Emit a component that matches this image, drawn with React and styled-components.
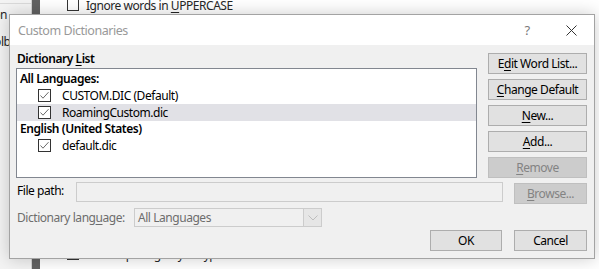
import React from 'react';
import styled, { createGlobalStyle } from 'styled-components';

const GlobalStyle = createGlobalStyle`
  html, body {
    margin: 0;
    padding: 0;
    background: #ffffff;
  }
  * {
    box-sizing: border-box;
  }
`;

const Stage = styled.div`
  position: relative;
  width: 599px;
  height: 269px;
  overflow: hidden;
  background: #ffffff;
  font-family: "Noto Sans", "Open Sans", sans-serif;
  font-size: 12px;
  letter-spacing: -0.45px;
  color: #000;
`;

/* Word Options window sitting behind the dialog */
const BackWindow = styled.div`
  display: flex;
  height: 100%;
`;

const NavPane = styled.div`
  width: 32px;
  flex-shrink: 0;
  display: flex;
  flex-direction: column;
  padding-top: 3px;
  background: #f3f3f3;
  border-right: 1px solid #d2d2d2;
  overflow: hidden;
`;

const NavSeparator = styled.div`
  height: 1px;
  background: #dadada;
`;

const NavItem = styled.div`
  white-space: nowrap;
  line-height: 22px;
  margin-bottom: 5px;
  margin-left: -88px;
  color: #262626;
`;

const Splitter = styled.div`
  width: 8px;
  flex-shrink: 0;
  background: #626262;
`;

const OptionsPane = styled.div`
  flex: 1;
  display: flex;
  flex-direction: column;
  padding-left: 27px;
`;

const OptionRow = styled.div`
  display: flex;
  align-items: center;
  gap: 7px;
  height: 16px;
  color: #262626;
  margin-top: ${(p) => (p.$bottom ? 'auto' : '-3px')};
  margin-bottom: ${(p) => (p.$bottom ? '7px' : '0')};
`;

const BackCheck = styled.span`
  width: 12px;
  height: 12px;
  border: 1px solid #333;
  background: #fff;
`;

/* Dialog */
const Dialog = styled.div`
  position: absolute;
  left: 9px;
  top: 14px;
  width: 586px;
  height: 245px;
  display: flex;
  flex-direction: column;
  background: #f0f0f0;
  border: 1px solid #a3a3a3;
  box-shadow: 0 0 16px rgba(0, 0, 0, 0.2);
`;

const TitleBar = styled.div`
  height: 30px;
  flex-shrink: 0;
  display: flex;
  align-items: center;
  padding-left: 8px;
  background: #ffffff;
`;

const Title = styled.div`
  flex: 1;
  color: #999999;
  font-size: 12.5px;
`;

const TitleButton = styled.div`
  width: 46px;
  height: 30px;
  display: flex;
  align-items: center;
  justify-content: center;
  color: #7a7a7a;
  font-size: 13px;
  padding-left: ${(p) => (p.$help ? '4px' : '0')};
`;

const Body = styled.div`
  flex: 1;
  display: flex;
  flex-direction: column;
  padding: 7px 7px 7px 6px;
`;

const TopRow = styled.div`
  display: flex;
  gap: 11px;
`;

const ListColumn = styled.div`
  flex: 1;
  display: flex;
  flex-direction: column;
`;

const GroupLabel = styled.div`
  height: 16px;
  line-height: 14px;
  padding-left: 1px;
  font-weight: 600;
`;

const ListBox = styled.div`
  height: 110px;
  padding: 1px 0;
  background: #ffffff;
  border: 1px solid #828790;
`;

const ListHeader = styled.div`
  height: 16px;
  line-height: 16px;
  padding-left: 3px;
  font-weight: 600;
  margin-top: ${(p) => (p.$first ? '1px' : '0')};
`;

const ListItem = styled.div`
  height: 17px;
  display: flex;
  align-items: center;
  gap: 11px;
  padding-left: 21px;
  background: ${(p) => (p.$selected ? '#e1e1e6' : 'transparent')};
`;

const CheckBox = styled.span`
  width: 13px;
  height: 13px;
  display: flex;
  align-items: center;
  justify-content: center;
  border: 1px solid #333333;
  background: #ffffff;
`;

const ButtonColumn = styled.div`
  width: 99px;
  flex-shrink: 0;
  display: flex;
  flex-direction: column;
  gap: 5px;
  padding-top: 1px;
`;

const Button = styled.div`
  width: ${(p) => p.$width || '100%'};
  height: 21px;
  flex-shrink: 0;
  display: flex;
  align-items: center;
  justify-content: center;
  margin-top: ${(p) => p.$offset || '0'};
  background: ${(p) => (p.$disabled ? '#cccccc' : '#e1e1e1')};
  border: 1px solid ${(p) => (p.$disabled ? '#bfbfbf' : '#adadad')};
  color: ${(p) => (p.$disabled ? '#838383' : '#000000')};
  white-space: nowrap;
`;

const FieldRow = styled.div`
  display: flex;
  align-items: flex-start;
  gap: ${(p) => p.$gap || '0'};
  margin-top: ${(p) => p.$top};
`;

const FieldLabel = styled.div`
  width: ${(p) => p.$width};
  flex-shrink: 0;
  padding-left: 1px;
  line-height: ${(p) => p.$line};
  color: ${(p) => (p.$muted ? '#6d6d6d' : '#000000')};
`;

const PathInput = styled.div`
  flex: 1;
  height: 20px;
  background: #f0f0f0;
  border: 1px solid #cccccc;
`;

const Select = styled.div`
  width: 188px;
  height: 19px;
  display: flex;
  background: #f0f0f0;
  border: 1px solid #cccccc;
  color: #6d6d6d;
`;

const SelectValue = styled.div`
  flex: 1;
  padding-left: 3px;
  line-height: 17px;
`;

const SelectArrow = styled.div`
  width: 18px;
  display: flex;
  align-items: center;
  justify-content: center;
  background: #e6e6e6;
  border-left: 1px solid #cccccc;
`;

const Footer = styled.div`
  display: flex;
  justify-content: flex-end;
  gap: 12px;
  margin-top: 3px;
`;

const Key = styled.span`
  text-decoration: underline;
  text-underline-offset: 2px;
`;

const Check = () => (
  <CheckBox>
    <svg width="11" height="11" viewBox="0 0 11 11">
      <polyline points="1.5,5.5 4,8.2 9.5,2.2" fill="none" stroke="#6a6a6a" strokeWidth="1" />
    </svg>
  </CheckBox>
);

const groups = [
  { name: 'All Languages:', items: ['CUSTOM.DIC (Default)', 'RoamingCustom.dic'] },
  { name: 'English (United States)', items: ['default.dic'] },
];

export default function App() {
  return (
    <>
      <GlobalStyle />
      <Stage>
        <BackWindow>
          <NavPane>
            <NavSeparator />
            <NavItem>Customize Ribbon</NavItem>
            <NavItem>Quick Access Toolbar</NavItem>
          </NavPane>
          <Splitter />
          <OptionsPane>
            <OptionRow>
              <BackCheck />
              <span>Ignore words in <Key>U</Key>PPERCASE</span>
            </OptionRow>
            <OptionRow $bottom>
              <BackCheck />
              <span>Check spelling as you type</span>
            </OptionRow>
          </OptionsPane>
        </BackWindow>

        <Dialog>
          <TitleBar>
            <Title>Custom Dictionaries</Title>
            <TitleButton $help>?</TitleButton>
            <TitleButton>
              <svg width="11" height="11" viewBox="0 0 11 11">
                <path d="M0.5 0.5 L10.5 10.5 M10.5 0.5 L0.5 10.5" stroke="#333" strokeWidth="1" />
              </svg>
            </TitleButton>
          </TitleBar>

          <Body>
            <TopRow>
              <ListColumn>
                <GroupLabel>
                  Dictionary <Key>L</Key>ist
                </GroupLabel>
                <ListBox>
                  {groups.map((g, gi) => (
                    <React.Fragment key={g.name}>
                      <ListHeader $first={gi === 0}>{g.name}</ListHeader>
                      {g.items.map((item) => (
                        <ListItem key={item} $selected={item === 'RoamingCustom.dic'}>
                          <Check />
                          <span>{item}</span>
                        </ListItem>
                      ))}
                    </React.Fragment>
                  ))}
                </ListBox>
              </ListColumn>
              <ButtonColumn>
                <Button>E<Key>d</Key>it Word List...</Button>
                <Button><Key>C</Key>hange Default</Button>
                <Button><Key>N</Key>ew...</Button>
                <Button><Key>A</Key>dd...</Button>
                <Button $disabled><Key>R</Key>emove</Button>
              </ButtonColumn>
            </TopRow>

            <FieldRow $top="4px" $gap="11px">
              <FieldLabel $width="49px" $line="17px">File path:</FieldLabel>
              <PathInput />
              <Button $disabled $width="73px" $offset="1px"><Key>B</Key>rowse...</Button>
            </FieldRow>

            <FieldRow $top="4px">
              <FieldLabel $width="118px" $line="19px" $muted>
                Dictionary lang<Key>u</Key>age:
              </FieldLabel>
              <Select>
                <SelectValue>All Languages</SelectValue>
                <SelectArrow>
                  <svg width="10" height="6" viewBox="0 0 10 6">
                    <polyline points="0.5,0.5 5,5 9.5,0.5" fill="none" stroke="#bdbdbd" strokeWidth="1" />
                  </svg>
                </SelectArrow>
              </Select>
            </FieldRow>

            <Footer>
              <Button $width="72px">OK</Button>
              <Button $width="73px">Cancel</Button>
            </Footer>
          </Body>
        </Dialog>
      </Stage>
    </>
  );
}
